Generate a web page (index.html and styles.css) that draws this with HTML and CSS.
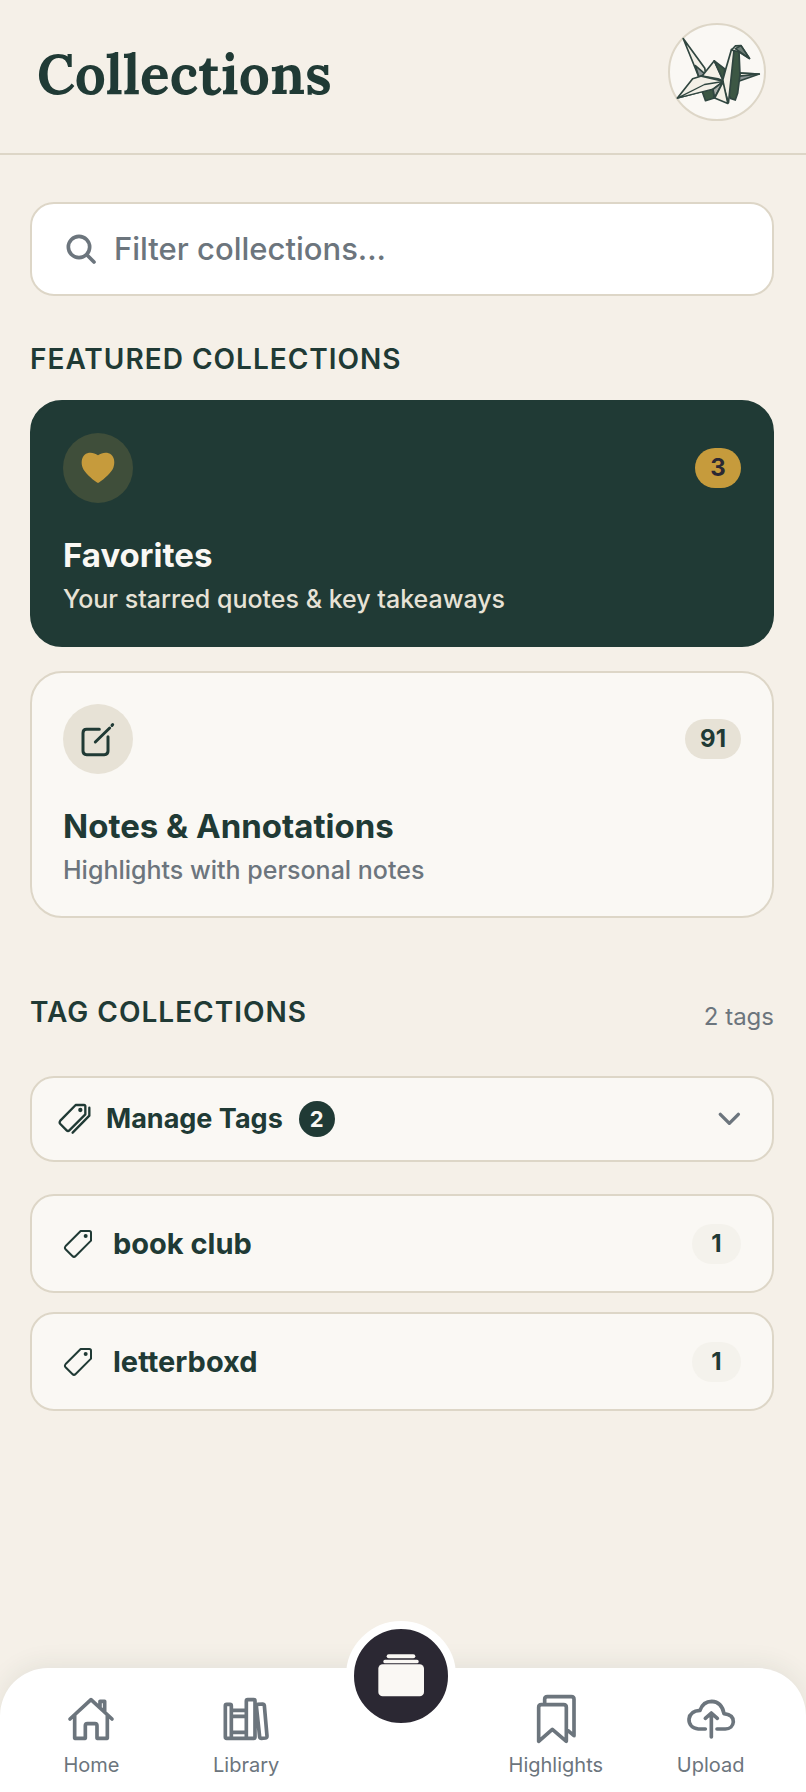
FILE: index.html
```html
<!DOCTYPE html>
<html lang="en">
<head>
<meta charset="utf-8">
<meta name="viewport" content="width=device-width, initial-scale=1">
<title>Collections</title>
<link rel="stylesheet" href="styles.css">
</head>
<body>
<header class="header">
  <h1 class="title">Collections</h1>
  <a class="avatar" href="#profile" aria-label="Profile">
    <svg viewBox="63 48 278 278" stroke="#304640" stroke-width="5" stroke-linejoin="round">
      <path fill="#f3f0e7" d="M102 88L166 176L168 192L148 201Z"/>
      <path fill="#8d9596" d="M138 168L168 194L148 201Z"/>
      <path fill="#f3f0e7" d="M194 154L158 199L205 207L222 214Z"/>
      <path fill="#3c5744" d="M194 154L225 178L221 214Z"/>
      <path fill="#3c5744" d="M158 244L190 237L194 264L168 272Z"/>
      <path fill="#8d9596" d="M264 215L270 190L327 193Z"/>
      <path fill="#f3f0e7" d="M268 199L327 193L270 190Z"/>
      <path fill="#3c5744" d="M249 122L267 126L270 195L263 250L256 270L242 265L234 250Z"/>
      <path fill="#f3f0e7" d="M245 120L252 125L236 278L217 218L228 178Z"/>
      <path fill="#f3f0e7" d="M85 264L130 207L156 199L220 214L190 236Z"/>
      <path fill="#f3f0e7" stroke-width="4" d="M85 264L165 224L220 215L192 237Z"/>
      <path fill="#a9aeaa" d="M220 216L190 238L195 262Z"/>
      <path fill="#f3f0e7" d="M220 216L228 252L234 280L195 264Z"/>
      <path fill="#f3f0e7" d="M245 122L256 110L273 109L298 147L266 127Z"/>
      <path fill="#6f7f78" d="M256 118L273 109L298 147Z"/>
    </svg>
  </a>
</header>

<main class="main">
  <label class="search">
    <svg class="search-icon" viewBox="196 700 90 90" fill="none" stroke="#6c757d" stroke-width="11" stroke-linecap="round" aria-hidden="true">
      <circle cx="235" cy="739" r="32"/><path d="M259 763L280 784"/>
    </svg>
    <input class="search-input" type="text" placeholder="Filter collections..." aria-label="Filter collections">
  </label>

  <section class="featured">
    <h2 class="heading">FEATURED COLLECTIONS</h2>
    <a class="card card-dark" href="#favorites">
      <span class="card-top">
        <svg class="card-icon" viewBox="189 309 210 210" aria-hidden="true">
          <path fill="#c69b3c" d="M294 376C281 366 264 366 254 374C244 383 243 400 248 413C254 428 274 445 290 457Q294 460 298 457C314 445 334 428 340 413C345 400 344 383 334 374C324 366 307 366 294 376Z"/>
        </svg>
        <span class="badge badge-gold">3</span>
      </span>
      <span class="card-title">Favorites</span>
      <span class="card-text">Your starred quotes &amp; key takeaways</span>
    </a>
    <a class="card" href="#notes">
      <span class="card-top">
        <svg class="card-icon" viewBox="189 131 210 210" fill="none" stroke="#203a35" stroke-width="9" stroke-linecap="round" stroke-linejoin="round" aria-hidden="true">
          <path d="M298 207H260Q249 207 249 218V272Q249 283 260 283H313Q324 283 324 272V229M286 245L329 203M336 195L338 193"/>
        </svg>
        <span class="badge">91</span>
      </span>
      <span class="card-title">Notes &amp; Annotations</span>
      <span class="card-text">Highlights with personal notes</span>
    </a>
  </section>

  <section class="tags">
    <div class="tags-head">
      <h2 class="heading">TAG COLLECTIONS</h2>
      <span class="tags-count">2 tags</span>
    </div>
    <button class="manage" type="button" aria-expanded="false">
      <svg class="manage-icon" viewBox="174 369 102 96" fill="none" stroke="#203a35" stroke-width="7" stroke-linecap="round" stroke-linejoin="round" aria-hidden="true">
        <path d="M227 375H252Q256 375 256 379V403L208 451Q204 455 200 451L181 432Q177 428 181 422ZM268 383V407L218 458"/>
        <circle cx="241" cy="390" r="3" fill="#203a35"/>
      </svg>
      <span class="manage-label">Manage Tags</span>
      <span class="manage-count">2</span>
      <svg class="chevron" viewBox="354 396 69 42" fill="none" stroke="#6c757d" stroke-width="10" stroke-linecap="round" stroke-linejoin="round" aria-hidden="true"><path d="M361 403L388 430L415 403"/></svg>
    </button>
    <ul class="tag-list">
      <li><a class="tag" href="#book-club">
        <svg class="tag-icon" viewBox="191 141 90 90" fill="none" stroke="#203a35" stroke-width="6" stroke-linejoin="round" aria-hidden="true"><path d="M244 147H270Q275 147 275 152V176L229 222Q224 227 219 222L198 201Q195 197 199 192Z"/><circle cx="259" cy="162" r="3" fill="#203a35"/></svg>
        <span class="tag-name">book club</span>
        <span class="badge badge-light">1</span>
      </a></li>
      <li><a class="tag" href="#letterboxd">
        <svg class="tag-icon" viewBox="191 141 90 90" fill="none" stroke="#203a35" stroke-width="6" stroke-linejoin="round" aria-hidden="true"><path d="M244 147H270Q275 147 275 152V176L229 222Q224 227 219 222L198 201Q195 197 199 192Z"/><circle cx="259" cy="162" r="3" fill="#203a35"/></svg>
        <span class="tag-name">letterboxd</span>
        <span class="badge badge-light">1</span>
      </a></li>
    </ul>
  </section>
</main>

<nav class="nav" aria-label="Primary">
  <a class="nav-item" href="#home">
    <svg class="nav-icon" viewBox="199 252 150 150" aria-hidden="true"><path d="M211 327L274 269L337 327M225 316V385H257V347Q257 341 263 341H286Q292 341 292 347V385H323V316M301 290V274H315V303"/></svg>
    Home
  </a>
  <a class="nav-item" href="#library">
    <svg class="nav-icon" viewBox="664 252 150 150" aria-hidden="true"><path d="M681 283H691Q695 283 695 287V381Q695 385 691 385H681Q677 385 677 381V287Q677 283 681 283ZM744 269H762Q766 269 766 273V381Q766 385 762 385H744Q740 385 740 381V273Q740 269 744 269ZM695 301H740M695 319H740M695 367H740M691 385H744M770 287Q769 283 773 283L789 282Q793 282 794 286L802 378Q802 383 798 384L785 385Q781 385 780 381Z"/></svg>
    Library
  </a>
  <div class="nav-center">
    <a class="nav-main" href="#collections" aria-label="Collections" aria-current="page">
      <svg viewBox="74 56 282 282" fill="#faf8f4" aria-hidden="true"><rect x="172" y="132" width="86" height="12" rx="6"/><rect x="162" y="148" width="106" height="11" rx="5"/><rect x="147" y="162" width="137" height="96" rx="13"/></svg>
    </a>
  </div>
  <a class="nav-item" href="#highlights">
    <svg class="nav-icon" viewBox="396 252 150 150" aria-hidden="true"><path d="M427 284H494Q502 284 502 292V394L460 358L419 394V292Q419 284 427 284ZM437 278V268Q437 260 445 260H517Q525 260 525 268V377L507 362"/></svg>
    Highlights
  </a>
  <a class="nav-item" href="#upload">
    <svg class="nav-icon" viewBox="861 252 150 150" aria-hidden="true"><path d="M919 357H898C880 355 869 343 870 327C872 311 885 302 903 301C909 284 920 274 938 274C958 275 971 288 975 311C991 313 1004 320 1003 336C1002 348 993 357 979 357H954M937 381V310M919 325L937 309L955 325"/></svg>
    Upload
  </a>
</nav>
</body>
</html>
```

FILE: styles.css
```css
* {
  box-sizing: border-box;
}

body {
  --green: #203a35;
  --line: #ddd6c7;
  --paper: #faf8f4;
  --gray: #6c757d;
  display: flex;
  flex-direction: column;
  min-height: 100vh;
  margin: 0;
  background: #f5f0e8;
  color: var(--green);
  font-family: Inter, "Liberation Sans", sans-serif;
}

a {
  color: inherit;
  text-decoration: none;
}

svg {
  display: block;
}

.header {
  display: flex;
  align-items: center;
  justify-content: space-between;
  padding: 23px 40px 32px 37px;
  border-bottom: 2px solid var(--line);
}

.title {
  margin: 0;
  padding-top: 3px;
  font: bold 55px/76px Lora, "Liberation Serif", serif;
}

.avatar {
  width: 98px;
  height: 98px;
  border: 2px solid var(--line);
  border-radius: 50%;
  background: var(--paper);
}

.main {
  padding: 47px 32px 48px 30px;
}

.search {
  display: flex;
  align-items: center;
  gap: 18px;
  height: 94px;
  padding: 0 32px 0 34px;
  border: 2px solid var(--line);
  border-radius: 24px;
  background: #fff;
}

.search-icon {
  flex: none;
  width: 30px;
  height: 30px;
}

.search-input {
  flex: 1;
  min-width: 0;
  padding: 0;
  border: 0;
  outline: 0;
  background: none;
  color: var(--green);
  font: 500 31px/40px Inter, "Liberation Sans", sans-serif;
}

.search-input::placeholder {
  color: var(--gray);
  opacity: 1;
}

.featured {
  display: flex;
  flex-direction: column;
  gap: 24px;
  margin-top: 46px;
}

.heading {
  margin: 0;
  font-size: 28px;
  font-weight: 600;
  line-height: 34px;
  letter-spacing: 1px;
}

.card {
  display: flex;
  flex-direction: column;
  padding: 31px 31px 29px;
  border: 2px solid var(--line);
  border-radius: 32px;
  background: var(--paper);
}

.card-dark {
  border-color: var(--green);
  background: var(--green);
  color: var(--paper);
}

.card-top {
  display: flex;
  align-items: center;
  justify-content: space-between;
  margin-bottom: 31px;
}

.card-icon {
  width: 70px;
  height: 70px;
  border-radius: 50%;
  background: #e7e2d6;
}

.card-dark .card-icon {
  background: #3f4e3a;
}

.badge {
  min-width: 46px;
  padding: 0 15px;
  border-radius: 20px;
  background: #e7e2d6;
  font-size: 24px;
  font-weight: 700;
  line-height: 40px;
  text-align: center;
}

.badge-gold {
  background: #c69b3c;
  color: #2b2833;
}

.badge-light {
  min-width: 49px;
  background: #f4f2ec;
}

.card-title {
  font-size: 33px;
  font-weight: 700;
  line-height: 42px;
}

.card-text {
  margin-top: 6px;
  color: var(--gray);
  font-size: 25px;
  font-weight: 500;
  line-height: 34px;
}

.card-dark .card-text {
  color: #e7e2d6;
}

.tags {
  margin-top: 77px;
}

.tags-head {
  display: flex;
  justify-content: space-between;
  margin-bottom: 37px;
}

.tags-count {
  color: var(--gray);
  font-size: 24px;
  line-height: 44px;
}

.manage {
  display: flex;
  align-items: center;
  width: 100%;
  height: 86px;
  padding: 0 31px 0 26px;
  border: 2px solid var(--line);
  border-radius: 24px;
  background: var(--paper);
  color: inherit;
  font: 700 27px/36px Inter, "Liberation Sans", sans-serif;
}

.manage-icon {
  width: 34px;
  height: 32px;
}

.manage-label {
  margin: 0 16px 0 14px;
}

.manage-count {
  width: 36px;
  border-radius: 50%;
  background: var(--green);
  color: var(--paper);
  font-size: 22px;
}

.chevron {
  width: 23px;
  height: 14px;
  margin-left: auto;
}

.tag-list {
  display: grid;
  gap: 19px;
  margin: 32px 0 0;
  padding: 0;
  list-style: none;
}

.tag {
  display: flex;
  align-items: center;
  height: 99px;
  padding: 0 31px;
  border: 2px solid var(--line);
  border-radius: 24px;
  background: var(--paper);
}

.tag-icon {
  width: 30px;
  height: 30px;
  margin-right: 20px;
}

.tag-name {
  margin-right: auto;
  font-size: 29px;
  font-weight: 700;
  line-height: 40px;
}

.nav {
  display: grid;
  grid-template-columns: repeat(5, 1fr);
  margin-top: auto;
  padding: 26px 18px 14px 14px;
  border-radius: 48px 48px 0 0;
  background: #fff;
  box-shadow: 0 -4px 24px #203a3514;
}

.nav-item {
  display: flex;
  flex-direction: column;
  align-items: center;
  gap: 8px;
  color: var(--gray);
  font-size: 20px;
  line-height: 26px;
}

.nav-icon {
  width: 50px;
  height: 50px;
  fill: none;
  stroke: currentColor;
  stroke-width: 11;
  stroke-linecap: round;
  stroke-linejoin: round;
}

.nav-center {
  display: flex;
  justify-content: center;
}

.nav-main {
  width: 110px;
  height: 110px;
  margin: -73px 0 -24px;
  border: 8px solid #fff;
  border-radius: 50%;
  background: #2b2833;
}
```
